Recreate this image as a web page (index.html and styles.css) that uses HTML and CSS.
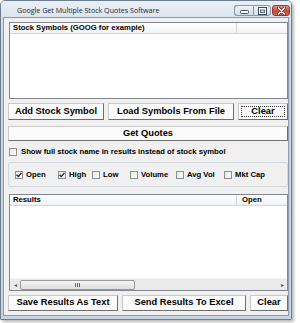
FILE: index.html
```html
<!DOCTYPE html>
<html>
<head>
<meta charset="utf-8">
<link rel="stylesheet" href="styles.css">
</head>
<body>
<div class="window">
  <div class="titlebar">
    <span class="title">Google Get Multiple Stock Quotes Software</span>
    <div class="caption">
      <span class="cbtn cmin"><svg width="9" height="5" viewBox="0 0 9 5"><rect x="0.5" y="0.5" width="8" height="3" rx="1" fill="#fff" stroke="#3e4c5c"/></svg></span>
      <span class="cbtn cmax"><svg width="9" height="8" viewBox="0 0 9 8"><rect x="0.5" y="0.5" width="8" height="7" fill="#fff" stroke="#3e4c5c"/><rect x="2.5" y="3" width="4" height="2.5" fill="#cdd9e6" stroke="#3e4c5c" stroke-width="0.8"/></svg></span>
      <span class="cbtn cclose"><svg width="9" height="8" viewBox="0 0 9 8"><path d="M1.5 1 L7.5 7 M7.5 1 L1.5 7" stroke="#6b1d16" stroke-width="3" stroke-linecap="round"/><path d="M1.5 1 L7.5 7 M7.5 1 L1.5 7" stroke="#fff" stroke-width="1.6" stroke-linecap="round"/></svg></span>
    </div>
  </div>
  <div class="client">
    <div class="listview symbols">
      <div class="lv-header">
        <div class="col col-main">Stock Symbols (GOOG for example)</div>
        <div class="col col-rest"></div>
      </div>
      <div class="lv-body"></div>
    </div>

    <div class="row row-top">
      <div class="btn w-add">Add Stock Symbol</div>
      <div class="btn w-load">Load Symbols From File</div>
      <div class="btn w-clear1"><span class="focusrect">Clear</span></div>
    </div>

    <div class="btn wide">Get Quotes</div>

    <div class="chk-row">
      <span class="chk"></span>
      <span class="lbl">Show full stock name in results instead of stock symbol</span>
    </div>

    <div class="group">
      <div class="gitem"><span class="chk on"><svg width="6" height="6" viewBox="0 0 6 6"><path d="M0.6 2.8 L2.3 4.6 L5.4 0.9" fill="none" stroke="#1a1a1a" stroke-width="1.3"/></svg></span><span class="lbl">Open</span></div>
      <div class="gitem"><span class="chk on"><svg width="6" height="6" viewBox="0 0 6 6"><path d="M0.6 2.8 L2.3 4.6 L5.4 0.9" fill="none" stroke="#1a1a1a" stroke-width="1.3"/></svg></span><span class="lbl">High</span></div>
      <div class="gitem"><span class="chk"></span><span class="lbl">Low</span></div>
      <div class="gitem"><span class="chk"></span><span class="lbl">Volume</span></div>
      <div class="gitem"><span class="chk"></span><span class="lbl">Avg Vol</span></div>
      <div class="gitem"><span class="chk"></span><span class="lbl">Mkt Cap</span></div>
    </div>

    <div class="listview results">
      <div class="lv-header">
        <div class="col col-main">Results</div>
        <div class="col col-rest">Open</div>
      </div>
      <div class="lv-body"></div>
      <div class="hscroll">
        <span class="arrow">&#9666;</span>
        <div class="track">
          <div class="thumb"><span class="grip"></span></div>
        </div>
        <span class="arrow">&#9656;</span>
      </div>
    </div>

    <div class="row row-bottom">
      <div class="btn w-save">Save Results As Text</div>
      <div class="btn w-send">Send Results To Excel</div>
      <div class="btn w-clear2">Clear</div>
    </div>
  </div>
</div>
</body>
</html>
```

FILE: styles.css
```css
* { box-sizing: border-box; }
html, body { margin: 0; padding: 0; background: #ffffff; }
body {
  width: 300px;
  height: 323px;
  overflow: hidden;
  font-family: "Liberation Sans", Arial, sans-serif;
  color: #000;
}

.window {
  width: 292px;
  height: 320px;
  border: 1px solid #6c7e90;
  border-radius: 5px 5px 1px 1px;
  background: linear-gradient(#dfe7f0, #c8d5e3 40px, #c6d3e1);
  padding: 0 2px 3px 2px;
  display: flex;
  flex-direction: column;
  box-shadow: 2px 2px 3px rgba(0, 0, 0, 0.28);
}

.titlebar {
  height: 16px;
  display: flex;
  align-items: center;
  justify-content: space-between;
  background: linear-gradient(#e9eff6, #dce5ef);
  margin: 0 -2px;
  padding: 0 1px 0 16px;
  border-radius: 4px 4px 0 0;
}
.title {
  font-family: "Open Sans", "Liberation Sans", sans-serif;
  font-size: 7.1px;
  color: #1c2733;
  padding-top: 2px;
  white-space: nowrap;
}
.caption {
  display: flex;
  align-items: center;
  margin-top: 3px;
}
.cbtn {
  height: 11px;
  display: flex;
  align-items: center;
  justify-content: center;
}
.cmin {
  width: 19px;
  border: 1px solid #8597ab;
  border-right: none;
  border-radius: 3px 0 0 3px;
  background: linear-gradient(#eef3f8, #d3deea);
  padding-top: 3px;
}
.cmax {
  width: 18px;
  border: 1px solid #8597ab;
  border-radius: 0 3px 3px 0;
  background: linear-gradient(#eef3f8, #d3deea);
}
.cclose {
  width: 18px;
  margin-left: 1px;
  border: 1px solid #8a3b33;
  border-radius: 3px;
  background: linear-gradient(#e5948a, #c9493c 55%, #d3685a);
}

.client {
  flex: 1;
  border: 1px solid #8a9bad;
  background: #f0f0f0;
  padding: 4px 0 4px 4px;
  display: flex;
  flex-direction: column;
  font-size: 9.3px;
  font-weight: bold;
}

.listview {
  border: 1px solid #828790;
  background: #fff;
  margin-left: 1px;
  display: flex;
  flex-direction: column;
}
.symbols { height: 77px; }
.results { height: 97px; margin-top: 7px; }

.lv-header {
  height: 11px;
  display: flex;
  background: linear-gradient(#ffffff, #f1f2f4);
  border-bottom: 1px solid #d5d5d5;
  font-size: 7.7px;
}
.col {
  height: 100%;
  display: flex;
  align-items: center;
  line-height: 1;
}
.col-main {
  width: 227px;
  padding-left: 3px;
  border-right: 1px solid #d5d5d5;
}
.col-rest {
  flex: 1;
  padding-left: 5px;
}
.lv-body { flex: 1; }

.hscroll {
  height: 12px;
  display: flex;
  align-items: center;
  background: #eaeaea;
  border-top: 1px solid #f4f4f4;
}
.arrow {
  width: 10px;
  font-size: 6px;
  font-weight: normal;
  color: #555;
  text-align: center;
}
.track {
  flex: 1;
  height: 100%;
  display: flex;
  align-items: center;
}
.thumb {
  width: 115px;
  height: 10px;
  border: 1px solid #9a9a9a;
  border-radius: 2px;
  background: linear-gradient(#f5f5f5, #dcdcdc);
  display: flex;
  align-items: center;
  justify-content: center;
}
.grip {
  width: 5px;
  height: 4px;
  border-left: 1px solid #666;
  border-right: 1px solid #666;
}
.grip::after {
  content: "";
  display: block;
  margin: 0 auto;
  width: 1px;
  height: 4px;
  background: #666;
}

.row {
  display: flex;
  gap: 4px;
}
.row-top { margin-top: 4px; height: 17px; }
.row-bottom { margin-top: 4px; height: 16px; }

.btn {
  display: flex;
  align-items: center;
  justify-content: center;
  height: 100%;
  border: 1px solid;
  border-color: #c9c9c9 #6f6f6f #6f6f6f #c9c9c9;
  background: #fbfbfb;
  white-space: nowrap;
  line-height: 1;
}
.w-add { width: 96px; }
.w-load { width: 126px; }
.w-clear1 { width: 50px; padding: 2px; }
.focusrect {
  flex: 1;
  align-self: stretch;
  border: 1px dotted #333;
  display: flex;
  align-items: center;
  justify-content: center;
}
.w-save { width: 110px; }
.w-send { width: 124px; }
.w-clear2 { width: 38px; }

.wide {
  margin-top: 6px;
  height: 15px;
  width: 280px;
}

.chk-row {
  margin-top: 5px;
  height: 11px;
  display: flex;
  align-items: center;
  gap: 4px;
  padding-left: 1px;
  font-size: 7.7px;
}
.chk {
  width: 8px;
  height: 8px;
  flex: none;
  border: 1px solid #8e8f8f;
  background: linear-gradient(135deg, #e6e6e6, #ffffff);
  display: flex;
  align-items: center;
  justify-content: center;
}
.lbl { line-height: 1; white-space: nowrap; }

.group {
  margin-top: 5px;
  height: 25px;
  width: 280px;
  border: 1px solid #d0d7dd;
  border-radius: 3px;
  padding-left: 6px;
  display: grid;
  grid-template-columns: 43px 34px 38px 46px 48px auto;
  align-items: center;
  font-size: 7.7px;
}
.gitem {
  display: flex;
  align-items: center;
  gap: 3px;
}
```
